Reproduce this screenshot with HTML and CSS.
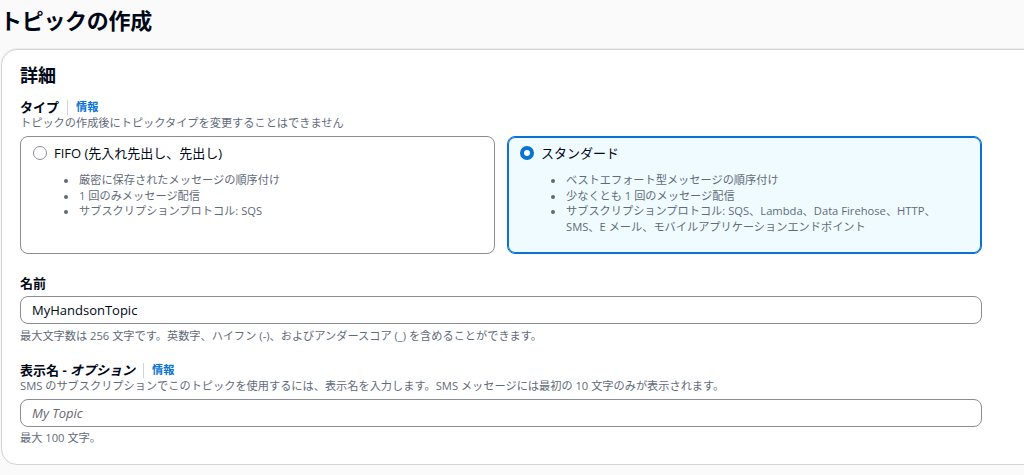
FILE: index.html
```html
<!DOCTYPE html>
<html lang="ja">
<head>
<meta charset="utf-8">
<title>トピックの作成</title>
<link rel="stylesheet" href="styles.css">
</head>
<body>
<h1 class="page-title">トピックの作成</h1>
<section class="card">
  <h2 class="card-title">詳細</h2>

  <div class="field-head">
    <span class="label">タイプ</span>
    <span class="divider"></span>
    <a class="info">情報</a>
  </div>
  <div class="desc">トピックの作成後にトピックタイプを変更することはできません</div>

  <div class="tiles">
    <div class="tile">
      <div class="tile-head">
        <span class="radio"></span>
        <span class="tile-label">FIFO (先入れ先出し、先出し)</span>
      </div>
      <ul class="tile-list">
        <li>厳密に保存されたメッセージの順序付け</li>
        <li>1 回のみメッセージ配信</li>
        <li>サブスクリプションプロトコル: SQS</li>
      </ul>
    </div>
    <div class="tile selected">
      <div class="tile-head">
        <span class="radio checked"></span>
        <span class="tile-label">スタンダード</span>
      </div>
      <ul class="tile-list">
        <li>ベストエフォート型メッセージの順序付け</li>
        <li>少なくとも 1 回のメッセージ配信</li>
        <li>サブスクリプションプロトコル: SQS、Lambda、Data Firehose、HTTP、SMS、E メール、モバイルアプリケーションエンドポイント</li>
      </ul>
    </div>
  </div>

  <div class="field-head name-head">
    <span class="label">名前</span>
  </div>
  <div class="input">MyHandsonTopic</div>
  <div class="hint">最大文字数は 256 文字です。英数字、ハイフン (-)、およびアンダースコア (_) を含めることができます。</div>

  <div class="field-head display-head">
    <span class="label">表示名 - <i>オプション</i></span>
    <span class="divider"></span>
    <a class="info">情報</a>
  </div>
  <div class="desc">SMS のサブスクリプションでこのトピックを使用するには、表示名を入力します。SMS メッセージには最初の 10 文字のみが表示されます。</div>
  <div class="input input-second placeholder">My Topic</div>
  <div class="hint hint-second">最大 100 文字。</div>
</section>
</body>
</html>
```

FILE: styles.css
```css
html, body {
  margin: 0;
  padding: 0;
  background: #fafafa;
  overflow: hidden;
}
body {
  font-family: "Open Sans", "Noto Sans CJK JP", sans-serif;
  color: #000716;
  width: 1024px;
  height: 475px;
}
.page-title {
  margin: 0 0 15px 0;
  padding: 6px 0 0 0;
  font-size: 22px;
  line-height: 28px;
  font-weight: 700;
  letter-spacing: -0.3px;
}
.card {
  margin-left: 1px;
  width: 1060px;
  box-sizing: border-box;
  background: #ffffff;
  border: 1px solid #d3d3d8;
  border-radius: 16px;
  padding: 14px 18px 19px 18px;
  box-shadow: 0 -1px 1px rgba(0, 7, 22, 0.06);
}
.card > * {
  max-width: 962px;
}
.card-title {
  margin: 0 0 12px 0;
  font-size: 18px;
  line-height: 22px;
  font-weight: 700;
}
.field-head {
  display: flex;
  align-items: center;
  height: 18px;
}
.label {
  font-size: 13px;
  font-weight: 700;
  line-height: 18px;
}
.label i {
  font-style: italic;
}
.divider {
  width: 1px;
  height: 15px;
  background: #d1d5db;
  margin: 0 8px 0 8px;
}
.info {
  color: #0972d3;
  font-size: 11.2px;
  font-weight: 700;
  line-height: 18px;
}
.desc, .hint {
  font-size: 11.2px;
  line-height: 14px;
  color: #5f6b7a;
}
.tiles {
  display: grid;
  grid-template-columns: 1fr 1fr;
  gap: 12px;
  margin-top: 6px;
}
.tile {
  border: 1px solid #8c8c94;
  border-radius: 8px;
  padding: 7px 12px 19px 12px;
  background: #ffffff;
}
.tile.selected {
  border-color: #0972d3;
  box-shadow: inset 0 0 0 1px #0972d3;
  background: #f0fbff;
}
.tile-head {
  display: flex;
  align-items: center;
  gap: 7px;
  height: 18px;
}
.radio {
  width: 14px;
  height: 14px;
  box-sizing: border-box;
  border-radius: 50%;
  border: 1.5px solid #8c8c94;
  background: #ffffff;
  flex: none;
}
.radio.checked {
  border: 4px solid #0972d3;
}
.tile-label {
  font-size: 13px;
  line-height: 18px;
}
.tile-list {
  margin: 10px 0 0 0;
  padding: 0 30px 0 45px;
  font-size: 11.2px;
  line-height: 15.5px;
  color: #5f6b7a;
}
.tile-list li {
  padding-left: 1px;
}
.tile-list li::marker {
  font-size: 10px;
}
.name-head {
  margin-top: 20px;
}
.input {
  margin-top: 4px;
  height: 28px;
  box-sizing: border-box;
  border: 1px solid #8c8c94;
  border-radius: 8px;
  padding: 0 11px;
  font-size: 13px;
  line-height: 26px;
  background: #ffffff;
}
.input-second {
  margin-top: 6px;
}
.placeholder {
  color: #656871;
  font-style: italic;
}
.hint {
  margin-top: 5px;
}
.hint-second {
  margin-top: 4px;
}
.display-head {
  margin-top: 18px;
}
```
